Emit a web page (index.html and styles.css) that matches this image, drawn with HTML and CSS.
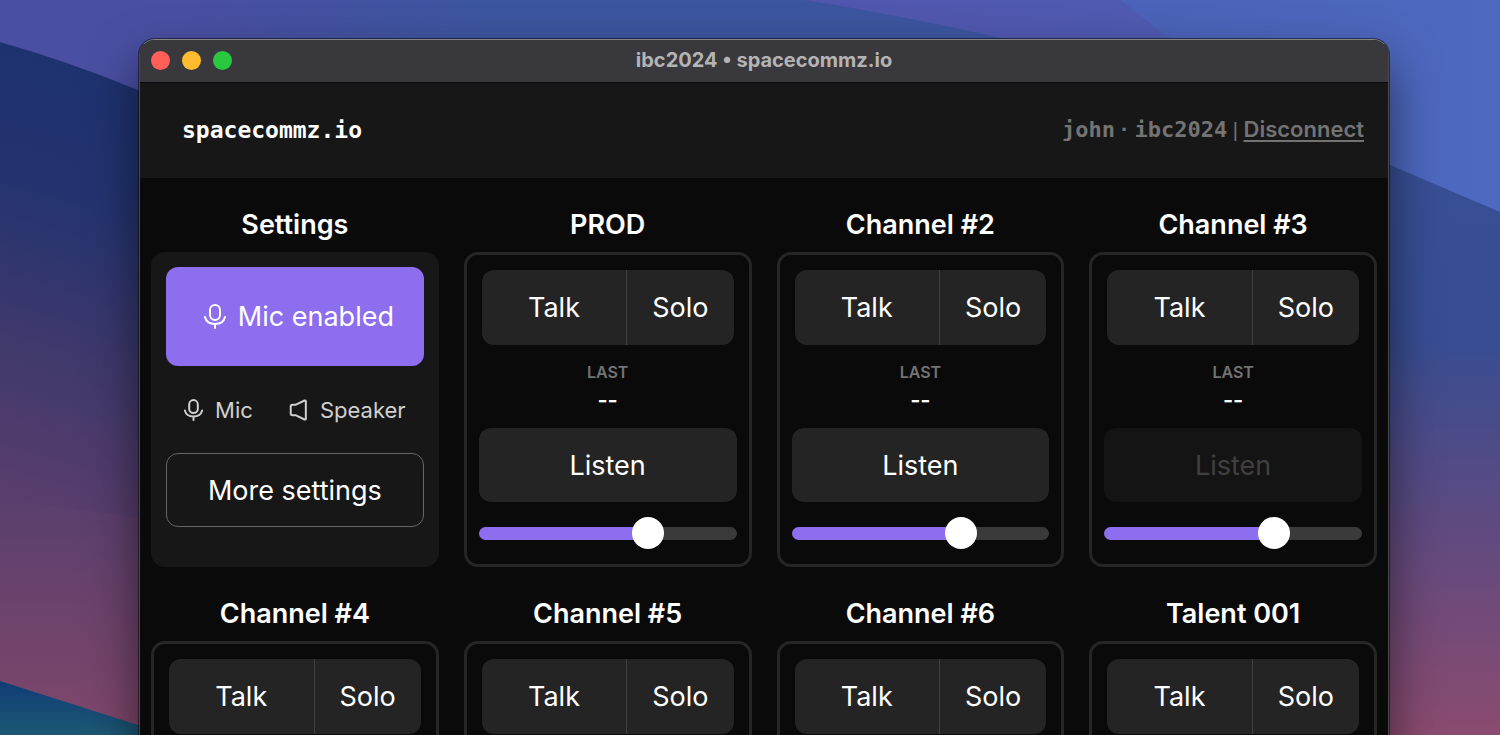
FILE: index.html
```html
<!DOCTYPE html>
<html lang="en">
  <head>
    <meta charset="UTF-8" />
    <meta name="viewport" content="width=device-width, initial-scale=1.0" />
    <title>ibc2024 • spacecommz.io</title>
    <link rel="stylesheet" href="styles.css">
  </head>
  <body>
    <svg class="wallpaper" viewBox="0 0 1500 735" preserveAspectRatio="none" aria-hidden="true">
      <defs>
        <linearGradient id="sky" x1="0" y1="0" x2="1" y2="0">
          <stop offset="0" stop-color="#4b4fa3" />
          <stop offset="0.12" stop-color="#4a4fa2" />
          <stop offset="0.32" stop-color="#3c559f" />
          <stop offset="0.6" stop-color="#3c559f" />
        </linearGradient>
        <linearGradient id="violet" x1="0" y1="0" x2="1" y2="0">
          <stop offset="0" stop-color="#5156ad" />
          <stop offset="1" stop-color="#4d60b6" />
        </linearGradient>
        <linearGradient id="azure" x1="0" y1="0" x2="1" y2="0">
          <stop offset="0" stop-color="#4b63b8" />
          <stop offset="1" stop-color="#4e69c0" />
        </linearGradient>
        <linearGradient id="left" x1="0.15" y1="0" x2="0" y2="1">
          <stop offset="0" stop-color="#1d3270" />
          <stop offset="0.25" stop-color="#23336f" />
          <stop offset="0.6" stop-color="#453a6c" />
          <stop offset="1" stop-color="#6a416c" />
        </linearGradient>
        <linearGradient id="rose" x1="0" y1="0" x2="0" y2="1">
          <stop offset="0" stop-color="#593f6d" />
          <stop offset="1" stop-color="#80476b" />
        </linearGradient>
        <linearGradient id="teal" x1="0" y1="0" x2="0" y2="1">
          <stop offset="0" stop-color="#103c76" />
          <stop offset="1" stop-color="#1d5873" />
        </linearGradient>
        <linearGradient id="right" x1="0" y1="0" x2="0" y2="1">
          <stop offset="0" stop-color="#375096" />
          <stop offset="0.35" stop-color="#384d92" />
          <stop offset="0.65" stop-color="#5e4a80" />
          <stop offset="1" stop-color="#8b4b6f" />
        </linearGradient>
      </defs>
      <rect width="1500" height="735" fill="url(#sky)" />
      <path d="M805 0H1500V300H1300L1010 40Q900 15 805 0Z" fill="url(#violet)" />
      <path d="M1120 0H1500V300H1300L1170 38Z" fill="url(#azure)" />
      <path d="M0 42Q70 62 138 90L300 180V600H0Z" fill="url(#left)" />
      <path d="M0 498L138 518L300 545V735H0Z" fill="url(#rose)" />
      <path d="M0 681L138 725L170 735H0Z" fill="url(#teal)" />
      <path d="M1300 130L1390 165L1500 212V735H1300Z" fill="url(#right)" />
    </svg>

    <div class="window">
      <div class="titlebar">
        <div class="lights">
          <span class="light close"></span>
          <span class="light minimize"></span>
          <span class="light maximize"></span>
        </div>
        <div class="title">ibc2024 • spacecommz.io</div>
      </div>

      <header class="header">
        <div class="logo">spacecommz.io</div>
        <div class="session">
          <span class="mono">john</span><span class="dot"> · </span><span class="mono">ibc2024</span><span class="bar"> | </span><a href="#">Disconnect</a>
        </div>
      </header>

      <main class="grid">
        <section class="column">
          <h2>Settings</h2>
          <div class="card settings">
            <button class="button mic-button">
              <svg class="icon" viewBox="0 0 22 25"><path d="M11 1a5 5 0 0 1 5 5v5a5 5 0 0 1-10 0V6a5 5 0 0 1 5-5ZM1 13c1 4.500 5 7 10 7s9-2.500 10-7M11 20v4" /></svg>
              Mic enabled
            </button>
            <div class="devices">
              <button class="device">
                <svg class="icon" viewBox="0 0 22 25"><path d="M11 1a5 5 0 0 1 5 5v5a5 5 0 0 1-10 0V6a5 5 0 0 1 5-5ZM1 13c1 4.500 5 7 10 7s9-2.500 10-7M11 20v4" /></svg>
                Mic
              </button>
              <button class="device">
                <svg class="icon" viewBox="0 0 22 25"><path d="M2 8.500v8q0 2 2 2h3.500L18 23.500q1.500.5 1.500-1v-20q0-1.500-1.500-1L7.500 6.500H4q-2 0-2 2Z" /></svg>
                Speaker
              </button>
            </div>
            <button class="button outline">More settings</button>
          </div>
        </section>

        <section class="column">
          <h2>PROD</h2>
          <div class="card channel">
            <div class="group">
              <button class="talk">Talk</button>
              <button class="solo">Solo</button>
            </div>
            <div class="last">
              <div class="label">LAST</div>
              <div class="value">--</div>
            </div>
            <button class="button listen">Listen</button>
            <input class="volume" type="range" min="0" max="100" value="68" aria-label="PROD volume">
          </div>
        </section>

        <section class="column">
          <h2>Channel #2</h2>
          <div class="card channel">
            <div class="group">
              <button class="talk">Talk</button>
              <button class="solo">Solo</button>
            </div>
            <div class="last">
              <div class="label">LAST</div>
              <div class="value">--</div>
            </div>
            <button class="button listen">Listen</button>
            <input class="volume" type="range" min="0" max="100" value="68" aria-label="Channel #2 volume">
          </div>
        </section>

        <section class="column">
          <h2>Channel #3</h2>
          <div class="card channel">
            <div class="group">
              <button class="talk">Talk</button>
              <button class="solo">Solo</button>
            </div>
            <div class="last">
              <div class="label">LAST</div>
              <div class="value">--</div>
            </div>
            <button class="button listen" disabled>Listen</button>
            <input class="volume" type="range" min="0" max="100" value="68" aria-label="Channel #3 volume">
          </div>
        </section>

        <section class="column">
          <h2>Channel #4</h2>
          <div class="card channel">
            <div class="group">
              <button class="talk">Talk</button>
              <button class="solo">Solo</button>
            </div>
          </div>
        </section>

        <section class="column">
          <h2>Channel #5</h2>
          <div class="card channel">
            <div class="group">
              <button class="talk">Talk</button>
              <button class="solo">Solo</button>
            </div>
          </div>
        </section>

        <section class="column">
          <h2>Channel #6</h2>
          <div class="card channel">
            <div class="group">
              <button class="talk">Talk</button>
              <button class="solo">Solo</button>
            </div>
          </div>
        </section>

        <section class="column">
          <h2>Talent 001</h2>
          <div class="card channel">
            <div class="group">
              <button class="talk">Talk</button>
              <button class="solo">Solo</button>
            </div>
          </div>
        </section>
      </main>
    </div>
  </body>
</html>
```
FILE: styles.css
```css
* {
  box-sizing: border-box;
}
body {
  margin: 0;
  height: 100vh;
  overflow: hidden;
  padding: 39px 111px 0 139px;
  background-color: #3c559f;
  color: #fff;
  font-family: Inter, "Liberation Sans", sans-serif;
}
button {
  margin: 0;
  padding: 0;
  border: none;
  background: none;
  color: inherit;
  font-family: inherit;
  cursor: pointer;
}
.wallpaper {
  position: absolute;
  inset: 0;
  z-index: -1;
  width: 100%;
  height: 100%;
}
.window {
  border: 1px solid #4a4a4a;
  border-top-color: #858585;
  border-radius: 16px;
  overflow: hidden;
  background-color: #0a0a0a;
  box-shadow: 0 0 0 1px rgba(0, 0, 0, 0.5), 0 24px 50px rgba(0, 0, 0, 0.55);
}

/* Title bar */
.titlebar {
  display: grid;
  grid-template-columns: 1fr auto 1fr;
  align-items: center;
  height: 42px;
  padding: 0 11px 2px;
  background-color: #39383c;
}
.lights {
  display: flex;
  gap: 12px;
}
.light {
  width: 19px;
  height: 19px;
  border-radius: 50%;
}
.close {
  background-color: #ff5f57;
}
.minimize {
  background-color: #febc2e;
}
.maximize {
  background-color: #28c840;
}
.title {
  color: #b4b4b5;
  font-size: 20px;
  font-weight: 700;
  line-height: 24px;
}

/* Header */
.header {
  display: flex;
  justify-content: space-between;
  align-items: center;
  height: 96px;
  padding: 0 24px 2px 42px;
  border-top: 1px solid #0c0c0c;
  background-color: #171717;
}
.logo {
  font-family: "DejaVu Sans Mono", monospace;
  font-size: 23px;
  font-weight: 700;
  line-height: 28px;
}
.session {
  color: #737373;
  font-size: 22px;
  font-weight: 600;
  line-height: 28px;
}
.session a {
  color: inherit;
  text-underline-offset: 3px;
}
.mono {
  font-family: "DejaVu Sans Mono", monospace;
  font-weight: 700;
}
.dot,
.bar {
  font-family: "Liberation Sans", sans-serif;
}
.dot {
  font-weight: 700;
}
.bar {
  font-size: 20px;
  font-weight: 400;
}

/* Channels */
.grid {
  display: grid;
  grid-template-columns: repeat(4, 1fr);
  gap: 24px 25px;
  padding: 24px 11px;
}
.column {
  display: flex;
  flex-direction: column;
}
h2 {
  margin: 0 0 4px;
  font-size: 27px;
  font-weight: 600;
  line-height: 46px;
  text-align: center;
}
.card {
  height: 315px;
  border-radius: 14px;
}
.settings {
  padding: 15px;
  background-color: #171717;
}
.channel {
  padding: 12px;
  border: 3px solid #262626;
}
.button {
  display: block;
  width: 100%;
  height: 74px;
  border-radius: 12px;
  font-size: 27px;
}
.icon {
  fill: none;
  stroke: currentColor;
  stroke-width: 2;
  stroke-linecap: round;
  stroke-linejoin: round;
}
.icon path {
  vector-effect: non-scaling-stroke;
}
.mic-button {
  display: flex;
  justify-content: center;
  align-items: center;
  gap: 12px;
  height: 99px;
  padding-left: 8px;
  background-color: #8c6eee;
}
.mic-button .icon {
  width: 22px;
  height: 25px;
}
.devices {
  display: flex;
  justify-content: space-around;
  align-items: center;
  height: 87px;
}
.device {
  display: flex;
  align-items: center;
  gap: 12px;
  color: #d0d0d0;
  font-size: 22px;
}
.device .icon {
  width: 19px;
  height: 22px;
}
.outline {
  border: 1px solid #666;
}
.group {
  display: flex;
  height: 75px;
  margin: 3px;
  border-radius: 12px;
  overflow: hidden;
  background-color: #242424;
}
.talk,
.solo {
  font-size: 27px;
}
.talk {
  flex: 1;
}
.solo {
  padding: 0 25px;
  border-left: 1px solid #404040;
}
.last {
  display: flex;
  flex-direction: column;
  align-items: center;
  height: 80px;
  padding-top: 14px;
}
.label {
  color: #737373;
  font-size: 16px;
  font-weight: 600;
  line-height: 20px;
}
.value {
  font-size: 22px;
  font-weight: 600;
  line-height: 36px;
}
.listen {
  background-color: #242424;
}
.listen:disabled {
  background-color: #141414;
  color: #404040;
}
.volume {
  display: block;
  width: 100%;
  height: 32px;
  margin: 15px 0 0;
  appearance: none;
  background: none;
}
.volume::-webkit-slider-runnable-track {
  height: 13px;
  border-radius: 7px;
  background: linear-gradient(to right, #8c6eee 66%, #3a3a3a 66%);
}
.volume::-webkit-slider-thumb {
  appearance: none;
  width: 32px;
  height: 32px;
  margin-top: -10px;
  border-radius: 50%;
  background-color: #fff;
}
```
